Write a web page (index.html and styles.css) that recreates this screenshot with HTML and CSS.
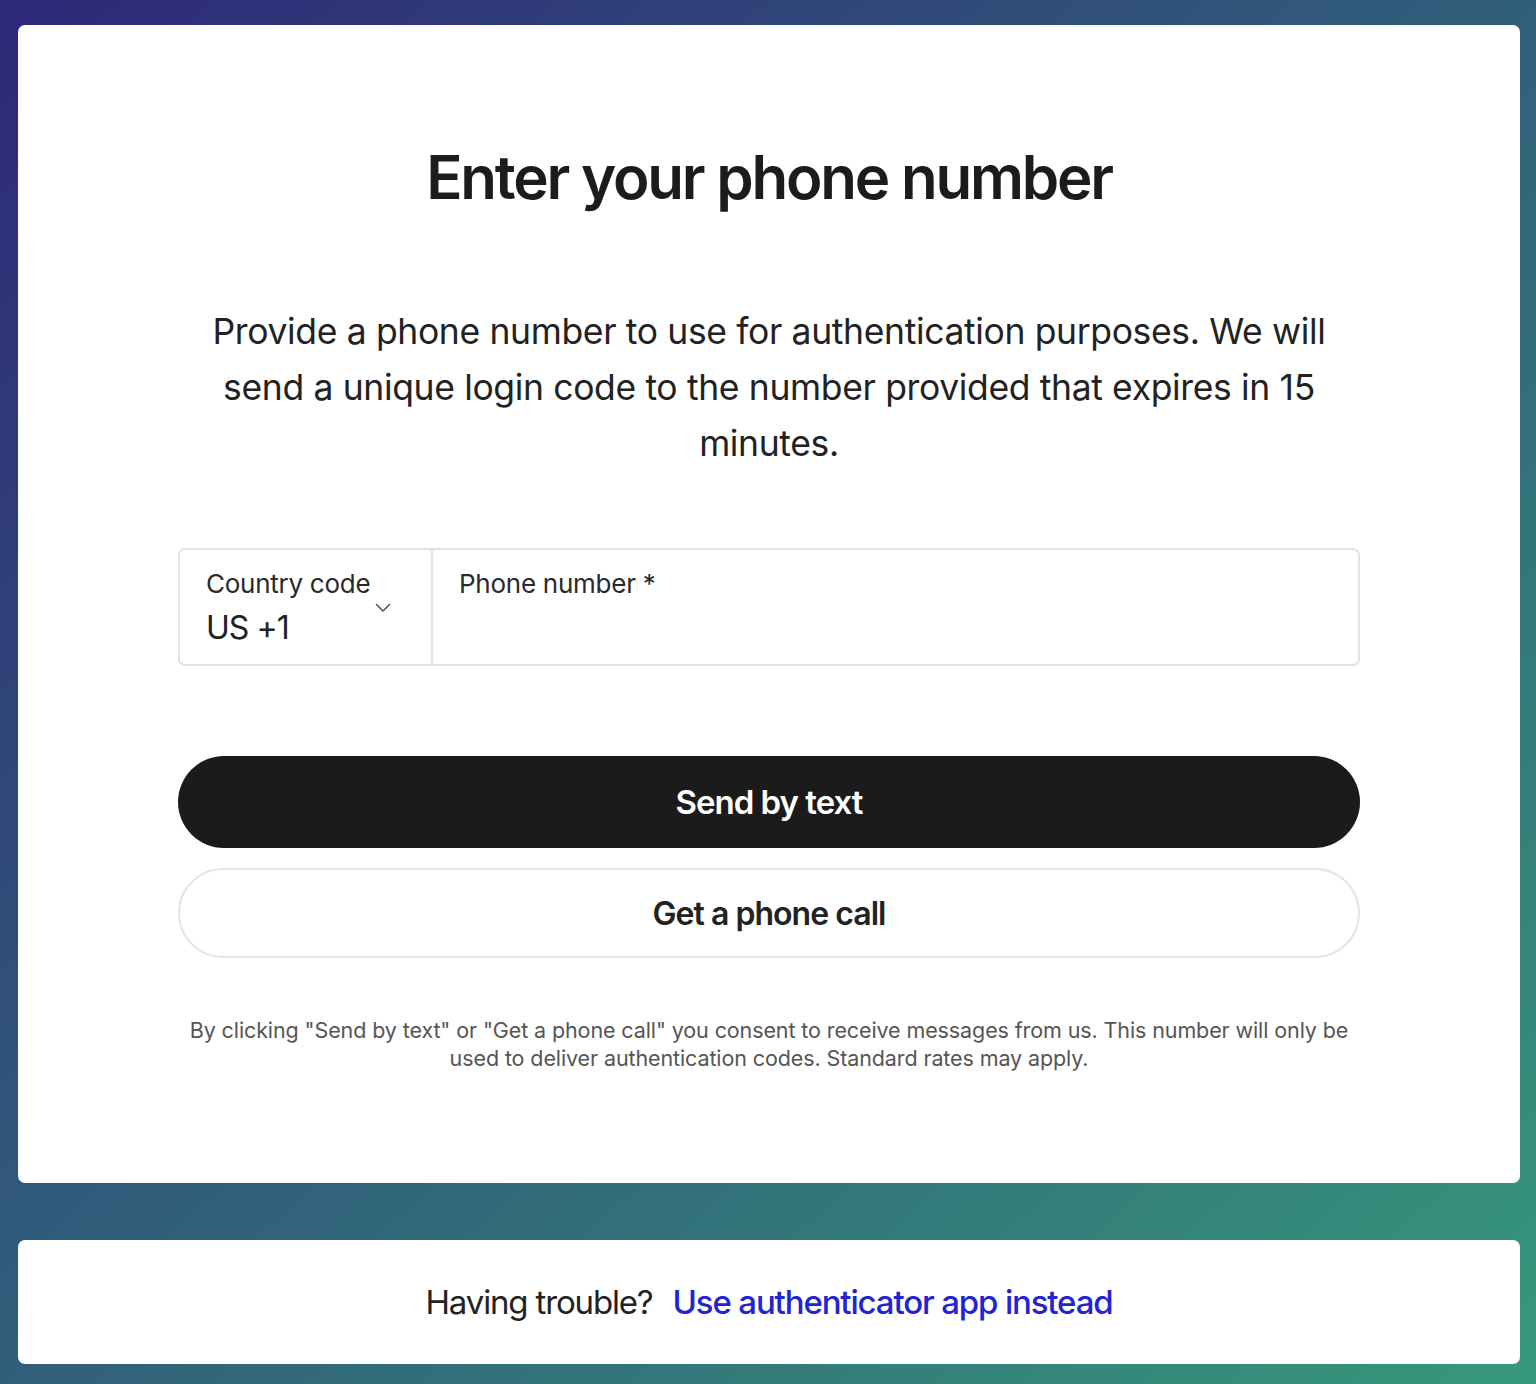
FILE: index.html
```html
<!DOCTYPE html>
<html lang="en">
<head>
    <meta charset="UTF-8">
    <meta name="viewport" content="width=device-width, initial-scale=1.0">
    <title>Enter your phone number</title>
    <link rel="stylesheet" href="styles.css">
</head>
<body>
    <div class="page">
        <div class="card">
            <h1>Enter your phone number</h1>
            <p class="intro">Provide a phone number to use for authentication purposes. We will send a unique login code to the number provided that expires in 15 minutes.</p>

            <div class="form">
                <div class="phone-group">
                    <div class="country">
                        <span class="field-label">Country code</span>
                        <span class="field-value">US +1</span>
                        <svg class="chevron" width="16" height="10" viewBox="0 0 16 10">
                            <path d="M1.5 1.5 L8 8 L14.5 1.5" fill="none" stroke="#555" stroke-width="1.6" stroke-linecap="round" stroke-linejoin="round"/>
                        </svg>
                    </div>
                    <div class="number">
                        <span class="field-label">Phone number *</span>
                    </div>
                </div>

                <button class="btn btn-dark">Send by text</button>
                <button class="btn btn-light">Get a phone call</button>

                <p class="fine-print">By clicking "Send by text" or "Get a phone call" you consent to receive messages from us. This number will only be used to deliver authentication codes. Standard rates may apply.</p>
            </div>
        </div>

        <div class="card help">
            <span>Having trouble?</span>
            <a href="#">Use authenticator app instead</a>
        </div>
    </div>
</body>
</html>
```

FILE: styles.css
```css
* {
    margin: 0;
    padding: 0;
    box-sizing: border-box;
}

body {
    font-family: 'Inter', 'Liberation Sans', sans-serif;
    background: linear-gradient(to bottom right, #2e2878 0%, #315f7a 50%, #36987a 100%);
    color: #222;
    min-height: 100vh;
}

.page {
    padding: 25px 16px 20px 18px;
    display: flex;
    flex-direction: column;
    gap: 57px;
}

.card {
    background: #fff;
    border-radius: 7px;
    padding: 115px 0 111px;
    text-align: center;
}

.card h1 {
    font-size: 60px;
    line-height: 74px;
    font-weight: 600;
    letter-spacing: -0.037em;
    color: #1c1c1c;
    margin-bottom: 90px;
}

.intro {
    max-width: 1140px;
    margin: 0 auto 76px;
    font-size: 35.5px;
    line-height: 56px;
    letter-spacing: -0.01em;
    color: #222;
}

.form {
    width: 1182px;
    margin: 0 auto;
    display: flex;
    flex-direction: column;
}

.phone-group {
    display: flex;
    height: 118px;
    border: 2px solid #e2e2e2;
    border-radius: 7px;
    text-align: left;
    margin-bottom: 90px;
}

.country {
    position: relative;
    width: 253px;
    border-right: 2px solid #e2e2e2;
    padding: 18px 26px 0;
    display: flex;
    flex-direction: column;
}

.number {
    flex: 1;
    padding: 18px 26px 0;
}

.field-label {
    font-size: 26px;
    line-height: 32px;
    letter-spacing: -0.01em;
    color: #2a2a2a;
}

.field-value {
    font-size: 32px;
    line-height: 44px;
    margin-top: 6px;
    letter-spacing: -0.03em;
    color: #222;
}

.chevron {
    position: absolute;
    right: 40px;
    top: 53px;
}

.btn {
    font-family: inherit;
    font-size: 32px;
    font-weight: 600;
    letter-spacing: -0.03em;
    border-radius: 50px;
    cursor: pointer;
}

.btn-dark {
    height: 92px;
    background: #1b1b1b;
    color: #fff;
    border: none;
    margin-bottom: 20px;
    font-size: 33px;
}

.btn-light {
    height: 90px;
    background: #fff;
    color: #222;
    border: 2px solid #e4e4e4;
    margin-bottom: 58px;
}

.fine-print {
    font-size: 21.5px;
    line-height: 28px;
    letter-spacing: -0.005em;
    color: #555;
    margin: 0 -10px;
}

.card.help {
    height: 124px;
    padding: 0;
    display: flex;
    align-items: center;
    justify-content: center;
    gap: 20px;
    font-size: 33px;
    letter-spacing: -0.035em;
}

.help a {
    color: #2323d6;
    font-weight: 500;
    text-decoration: none;
}
```
